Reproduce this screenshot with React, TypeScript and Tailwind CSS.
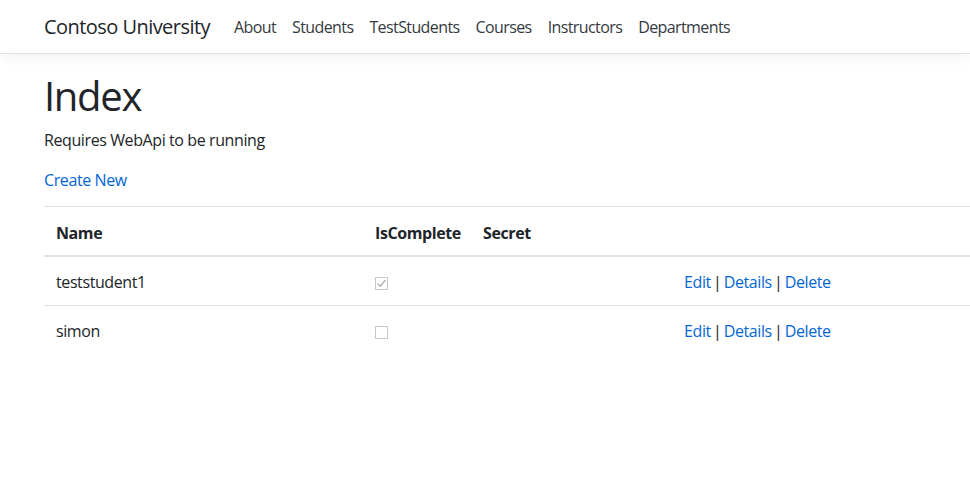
import React from "react";

const font = { fontFamily: '"Segoe UI", "Open Sans", "Liberation Sans", sans-serif' };

function Actions() {
  return (
    <span className="text-[16px] tracking-[-0.4px] [word-spacing:-1.5px] text-[#212529]">
      <a className="text-[#0366d6]">Edit</a> | <a className="text-[#0366d6]">Details</a> |{" "}
      <a className="text-[#0366d6]">Delete</a>
    </span>
  );
}

function Box({ checked }: { checked: boolean }) {
  return (
    <span className="inline-flex h-[13px] w-[13px] items-center justify-center border border-[#c8c8c8] bg-white align-middle">
      {checked && (
        <svg width="11" height="11" viewBox="0 0 11 11">
          <path d="M1.5 5.5 L4.2 8.2 L9.5 2" fill="none" stroke="#b0b0b0" strokeWidth="1.3" />
        </svg>
      )}
    </span>
  );
}

export default function App() {
  return (
    <div className="min-h-[485px] w-[970px] overflow-hidden bg-white text-[#212529]" style={font}>
      <nav className="flex h-[54px] items-center border-b border-[#dee2e6] bg-white pl-[44px] shadow-[0_4px_12px_rgba(0,0,0,0.05)]">
        <span className="mr-[24px] text-[20px] tracking-[-0.55px] text-[#212529]">Contoso University</span>
        <div className="flex gap-[16px] text-[16px] tracking-[-0.6px] text-[#343a40]">
          <span>About</span>
          <span>Students</span>
          <span>TestStudents</span>
          <span>Courses</span>
          <span>Instructors</span>
          <span>Departments</span>
        </div>
      </nav>
      <main className="pl-[44px]">
        <h1 className="mt-[18px] text-[40px] leading-[48px] font-normal tracking-[-1.3px]">Index</h1>
        <p className="mt-[8px] text-[16px] leading-[24px] tracking-[-0.4px]">Requires WebApi to be running</p>
        <p className="mt-[16px] text-[16px] leading-[24px] tracking-[-0.4px] text-[#0366d6]">Create New</p>
        <table className="mt-[14px] w-[940px] table-fixed border-collapse text-left text-[16px] tracking-[-0.4px]">
          <colgroup>
            <col className="w-[319px]" />
            <col className="w-[108px]" />
            <col className="w-[201px]" />
            <col />
          </colgroup>
          <thead>
            <tr className="border-t border-[#dee2e6]">
              <th className="border-b-2 border-[#dee2e6] px-[12px] pt-[14px] pb-[10px] align-bottom leading-[24px] font-bold">Name</th>
              <th className="border-b-2 border-[#dee2e6] px-[12px] pt-[14px] pb-[10px] align-bottom leading-[24px] font-bold">IsComplete</th>
              <th className="border-b-2 border-[#dee2e6] px-[12px] pt-[14px] pb-[10px] align-bottom leading-[24px] font-bold">Secret</th>
              <th className="border-b-2 border-[#dee2e6] px-[12px] pt-[14px] pb-[10px]"></th>
            </tr>
          </thead>
          <tbody>
            <tr className="border-b border-[#dee2e6]">
              <td className="px-[12px] pt-[13px] pb-[11px] leading-[24px]">teststudent1</td>
              <td className="px-[12px] pt-[13px] pb-[11px] leading-[24px]"><Box checked /></td>
              <td className="px-[12px] pt-[13px] pb-[11px]"></td>
              <td className="px-[12px] pt-[13px] pb-[11px] leading-[24px]"><Actions /></td>
            </tr>
            <tr>
              <td className="px-[12px] pt-[13px] pb-[11px] leading-[24px]">simon</td>
              <td className="px-[12px] pt-[13px] pb-[11px] leading-[24px]"><Box checked={false} /></td>
              <td className="px-[12px] pt-[13px] pb-[11px]"></td>
              <td className="px-[12px] pt-[13px] pb-[11px] leading-[24px]"><Actions /></td>
            </tr>
          </tbody>
        </table>
      </main>
    </div>
  );
}
